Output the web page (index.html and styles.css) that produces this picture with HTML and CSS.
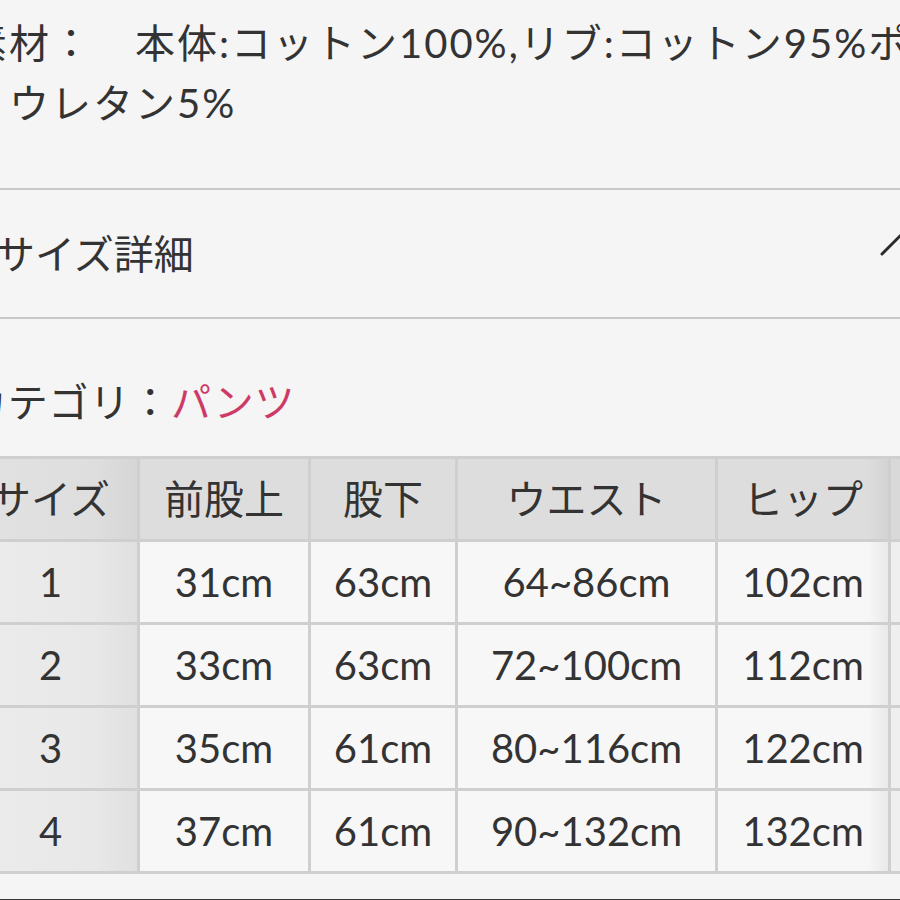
FILE: index.html
```html
<!DOCTYPE html>
<html lang="ja">
<head>
<meta charset="utf-8">
<title>サイズ詳細</title>
<link rel="stylesheet" href="styles.css">
</head>
<body>
<div class="page">
  <div class="material">
    <p class="line">素材：　本体:コットン100%,リブ:コットン95%ポリ</p>
    <p class="line indent">ウレタン5%</p>
  </div>
  <div class="acc-head">
    <span class="acc-title">サイズ詳細</span>
    <svg class="chevron" width="50" height="52" viewBox="0 0 50 52" aria-hidden="true">
      <polyline points="2,26 26,2 50,26" fill="none" stroke="#2b2b2b" stroke-width="3" stroke-linecap="round" stroke-linejoin="round"/>
    </svg>
  </div>
  <p class="category">カテゴリ：<span class="pink">パンツ</span></p>
  <table class="size">
    <colgroup>
      <col class="w1"><col class="w2"><col class="w3"><col class="w4"><col class="w5"><col class="w6">
    </colgroup>
    <thead>
      <tr><th class="first">サイズ</th><th>前股上</th><th>股下</th><th>ウエスト</th><th class="edge">ヒップ</th><th class="last">裾幅</th></tr>
    </thead>
    <tbody>
      <tr><td class="first">1</td><td>31cm</td><td>63cm</td><td>64~86cm</td><td class="edge">102cm</td><td class="last">22cm</td></tr>
      <tr><td class="first">2</td><td>33cm</td><td>63cm</td><td>72~100cm</td><td class="edge">112cm</td><td class="last">24cm</td></tr>
      <tr><td class="first">3</td><td>35cm</td><td>61cm</td><td>80~116cm</td><td class="edge">122cm</td><td class="last">26cm</td></tr>
      <tr><td class="first">4</td><td>37cm</td><td>61cm</td><td>90~132cm</td><td class="edge">132cm</td><td class="last">28cm</td></tr>
    </tbody>
  </table>
  <div class="bottombar"></div>
</div>
</body>
</html>
```
FILE: styles.css
```css
html, body {
  margin: 0;
  padding: 0;
}
body {
  background: #f5f5f5;
  width: 900px;
  height: 900px;
  overflow: hidden;
  font-family: "Lato", "Noto Sans CJK JP", sans-serif;
  color: #333333;
}
.page {
  margin-left: -30px;
  width: 960px;
}
.material {
  box-sizing: border-box;
  height: 188px;
  padding-top: 13px;
  margin-left: -3px;
  letter-spacing: 2px;
}
.line {
  margin: 0;
  font-size: 40px;
  line-height: 60px;
  height: 60px;
  white-space: nowrap;
}
.indent {
  padding-left: 42px;
}
.acc-head {
  box-sizing: border-box;
  display: flex;
  align-items: center;
  justify-content: space-between;
  height: 131px;
  border-top: 2px solid #c8c8c8;
  border-bottom: 2px solid #c8c8c8;
  padding-left: 25px;
  font-size: 40px;
}
.acc-title {
  line-height: 60px;
}
.chevron {
  display: block;
  flex: none;
}
.category {
  margin: 53px 0 0 -3px;
  height: 84px;
  font-size: 40px;
  line-height: 60px;
  letter-spacing: 0.8px;
  white-space: nowrap;
}
.pink {
  color: #cd3a67;
}
.size {
  margin-left: -6px;
  border-collapse: separate;
  border-spacing: 0;
  table-layout: fixed;
  width: 1100px;
  border-top: 3px solid #cfcfcf;
  font-size: 40px;
}
.w1 { width: 176px; }
.w2 { width: 171px; }
.w3 { width: 147px; }
.w4 { width: 260px; }
.w5 { width: 173px; }
.w6 { width: 173px; }
.size th,
.size td {
  box-sizing: border-box;
  height: 83px;
  padding: 0;
  text-align: center;
  vertical-align: middle;
  font-weight: 400;
  line-height: 1;
  border-right: 3px solid #cfcfcf;
  border-bottom: 3px solid #cfcfcf;
  white-space: nowrap;
}
.size th {
  background: #dddddd;
}
.size th.first {
  background: linear-gradient(to right, #e2e2e2 0%, #dedede 75%, #d6d6d6 100%);
}
.size th.edge {
  background: linear-gradient(to right, #dddddd 88%, #d3d3d3 100%);
}
.size th.last {
  background: #d9d9d9;
}
.size td {
  background: #f7f7f7;
}
.size td.first {
  background: linear-gradient(to right, #ececec 0%, #e8e8e8 75%, #e0e0e0 100%);
}
.size td.edge {
  background: linear-gradient(to right, #f7f7f7 88%, #e9e9e9 100%);
}
.size td.last {
  background: #efefef;
}
.bottombar {
  margin-top: 25px;
  height: 10px;
  border-top: 2px solid #3a3a3a;
}
```
